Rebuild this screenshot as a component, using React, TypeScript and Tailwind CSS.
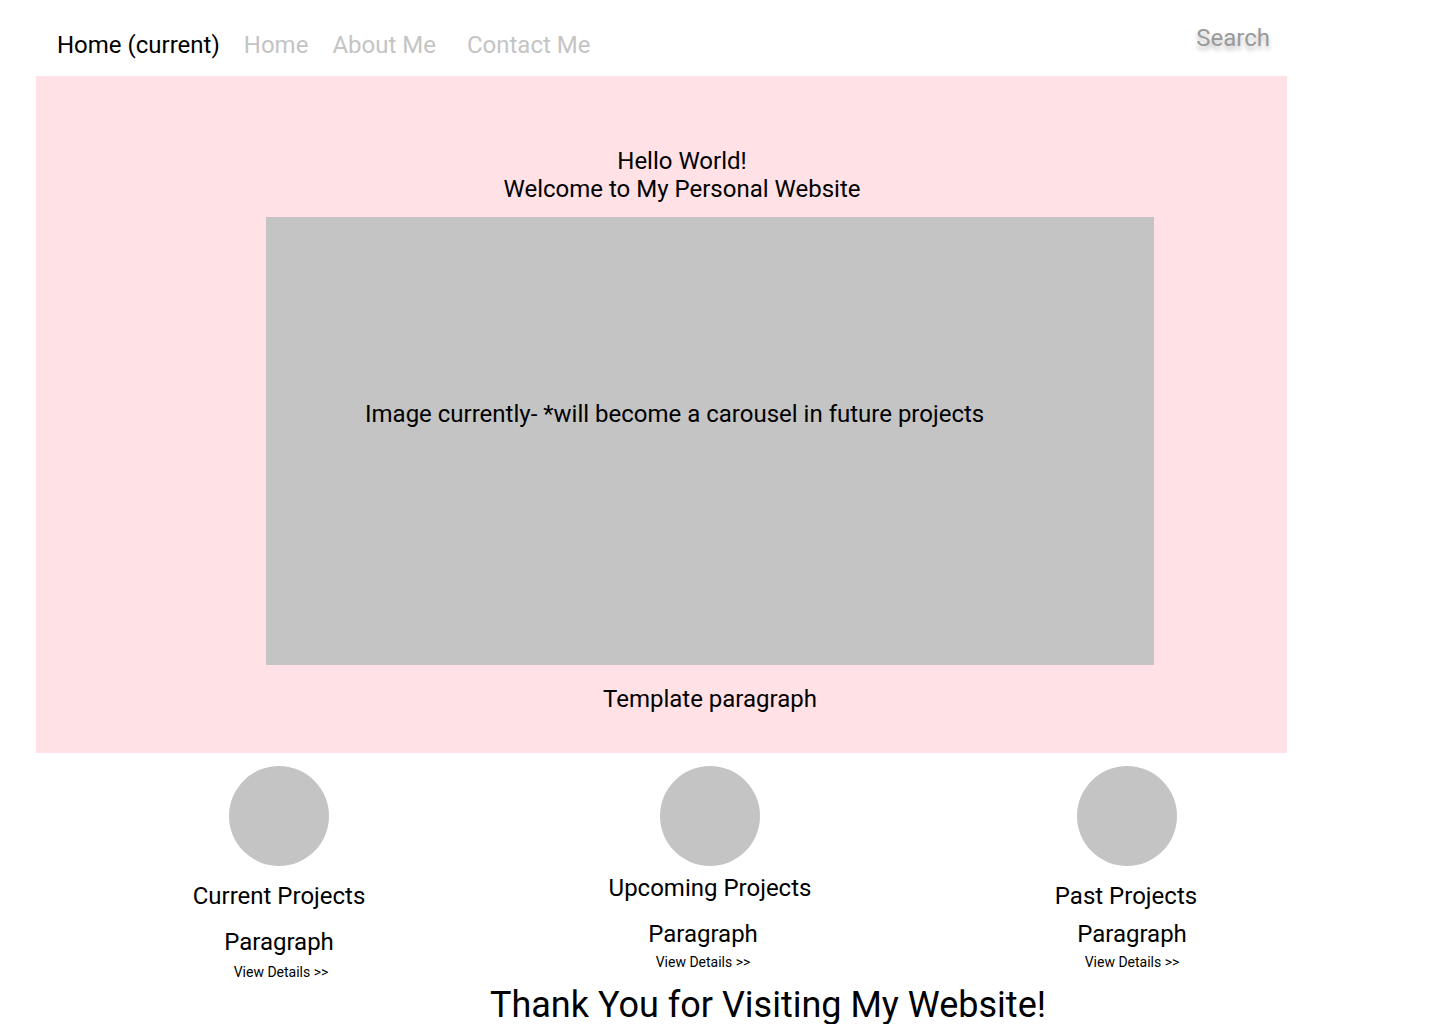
export default function App() {
  const font = { fontFamily: "Roboto, 'Noto Sans', sans-serif" };

  return (
    <div className="w-[1440px] bg-white text-black font-[Roboto,sans-serif]" style={font}>
      {/* Top nav */}
      <nav className="ml-[36px] w-[1251px] h-[76px] flex items-start text-[24px] leading-[28px]">
        <a className="ml-[21px] mt-[31px] text-black">Home (current)</a>
        <a className="ml-[24px] mt-[31px] text-[#c4c4c4]">Home</a>
        <a className="ml-[24px] mt-[31px] text-[#c4c4c4]">About Me</a>
        <a className="ml-[31px] mt-[31px] text-[#c4c4c4]">Contact Me</a>
        <span className="ml-auto mr-[17px] mt-[24px] text-[#9a9a9a] [text-shadow:0_4px_4px_rgba(0,0,0,0.25)]">
          Search
        </span>
      </nav>

      {/* Hero */}
      <section className="ml-[36px] w-[1251px] h-[677px] bg-[#ffe1e6] pt-[71px] text-[24px] leading-[28px]">
        <div className="pl-[41px] text-center">
          <p>Hello World!</p>
          <p>Welcome to My Personal Website</p>
        </div>
        <div className="ml-[230px] mt-[14px] w-[888px] h-[448px] bg-[#c4c4c4] pt-[183px] pl-[99px]">
          <p>Image currently- *will become a carousel in future projects</p>
        </div>
        <p className="ml-[230px] mt-[20px] w-[888px] text-center">Template paragraph</p>
      </section>

      {/* Project columns */}
      <div className="flex items-start pl-[159px] mt-[13px]">
        <div className="w-[240px] flex flex-col items-center">
          <div className="w-[100px] h-[100px] rounded-full bg-[#c4c4c4]" />
          <p className="mt-[16px] text-[24px] leading-[28px]">Current Projects</p>
          <p className="mt-[18px] text-[24px] leading-[28px]">Paragraph</p>
          <p className="mt-[8px] pl-[4px] text-[14px] leading-[16px]">View Details &gt;&gt;</p>
        </div>
        <div className="ml-[191px] w-[240px] flex flex-col items-center">
          <div className="w-[100px] h-[100px] rounded-full bg-[#c4c4c4]" />
          <p className="mt-[8px] text-[24px] leading-[28px]">Upcoming Projects</p>
          <p className="mt-[18px] pr-[14px] text-[24px] leading-[28px]">Paragraph</p>
          <p className="mt-[6px] pr-[14px] text-[14px] leading-[16px]">View Details &gt;&gt;</p>
        </div>
        <div className="ml-[177px] w-[240px] flex flex-col items-center">
          <div className="w-[100px] h-[100px] rounded-full bg-[#c4c4c4]" />
          <p className="mt-[16px] pr-[2px] text-[24px] leading-[28px]">Past Projects</p>
          <p className="mt-[10px] pl-[10px] text-[24px] leading-[28px]">Paragraph</p>
          <p className="mt-[6px] pl-[10px] text-[14px] leading-[16px]">View Details &gt;&gt;</p>
        </div>
      </div>

      {/* Footer message */}
      <p className="mt-[4px] pl-[96px] text-center text-[36px] leading-[42px]">
        Thank You for Visiting My Website!
      </p>
    </div>
  );
}
